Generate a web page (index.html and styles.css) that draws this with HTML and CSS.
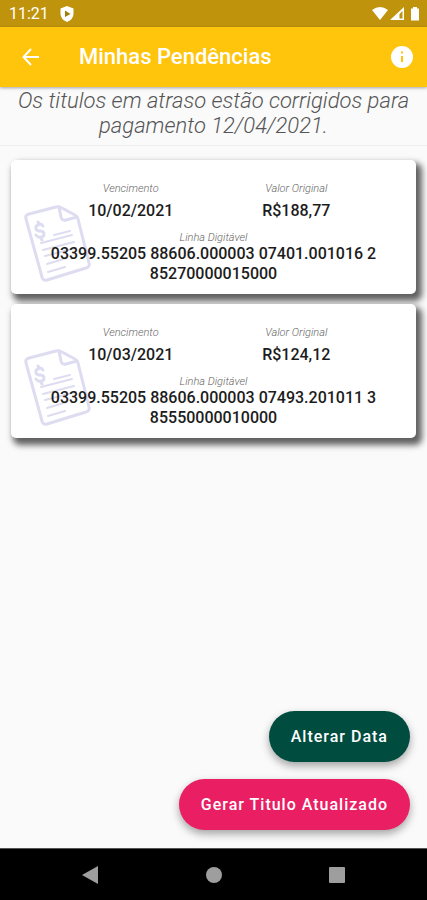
FILE: index.html
```html
<!DOCTYPE html>
<html lang="pt-BR">
<head>
<meta charset="utf-8">
<meta name="viewport" content="width=device-width, initial-scale=1">
<title>Minhas Pendências</title>
<link rel="stylesheet" href="styles.css">
</head>
<body>
<svg class="defs" aria-hidden="true">
  <symbol id="invoice" viewBox="0 0 70 80">
    <g fill="none" stroke="#dedcf0" stroke-width="3" stroke-linecap="round" stroke-linejoin="round">
      <path d="M6 10L33 3Q36 2 39 4L52 11Q54 12 55 15L66 59Q67 63 63 64L24 76Q20 77 19 73L3 15Q2 11 6 10Z"/>
      <path d="M36 3L38 13Q39 17 43 16L54 13"/>
      <path stroke-width="2" d="M31 31L47 27M18 39L49 31M20 46L51 38M22 52L53 44M24 60L44 54M25 68L42 63"/>
      <path d="M20 22Q18 19 15 21Q12 22 13 25Q14 27 17 27Q21 27 21 30Q21 33 18 33Q15 34 13 31M15 18L16 20M18 34L19 36"/>
    </g>
  </symbol>
</svg>
<div class="screen">
  <div class="status">
    <span class="clock">11:21</span>
    <svg class="shield" width="14" height="16" viewBox="0 0 14 16"><path d="M7 0L13.500 2.500V8Q13.500 13 7 16Q.5 13 .5 8V2.500Z" fill="#fff"/><path d="M5 4.500L10.500 8L5 11Z" fill="#a07d0c"/></svg>
    <svg class="signals" width="48" height="16" viewBox="0 0 48 16" fill="#fff"><path d="M0 4Q8-2 16 4L8 14Z"/><path fill-rule="evenodd" d="M18 14L32 1V14ZM27.500 12.500H30.500V5L27.500 8Z"/><path d="M39 2.500H41V1H45V2.500H47V14.500H39Z"/></svg>
  </div>
  <header class="appbar">
    <button class="icon-button" aria-label="Voltar"><svg width="18" height="18" viewBox="0 0 18 18" fill="none" stroke="#fff" stroke-width="2"><path d="M17 9H2M9 1L1.500 9L9 17"/></svg></button>
    <h1>Minhas Pendências</h1>
    <button class="icon-button" aria-label="Informações"><svg width="24" height="24" viewBox="0 0 24 24"><circle cx="12" cy="12" r="11" fill="#fff"/><path d="M11 6.500H13V8.500H11ZM11 11H13V17H11Z" fill="#ffc20e"/></svg></button>
  </header>
  <p class="notice">Os titulos em atraso estão corrigidos para pagamento 12/04/2021.</p>
  <main>
    <article class="card">
      <svg class="invoice" aria-hidden="true"><use href="#invoice"/></svg>
      <dl>
        <div><dt>Vencimento</dt><dd>10/02/2021</dd></div>
        <div><dt>Valor Original</dt><dd>R$188,77</dd></div>
        <div class="code"><dt>Linha Digitável</dt><dd>03399.55205 88606.000003 07401.001016 2 85270000015000</dd></div>
      </dl>
    </article>
    <article class="card">
      <svg class="invoice" aria-hidden="true"><use href="#invoice"/></svg>
      <dl>
        <div><dt>Vencimento</dt><dd>10/03/2021</dd></div>
        <div><dt>Valor Original</dt><dd>R$124,12</dd></div>
        <div class="code"><dt>Linha Digitável</dt><dd>03399.55205 88606.000003 07493.201011 3 85550000010000</dd></div>
      </dl>
    </article>
  </main>
  <div class="actions">
    <button class="fab green">Alterar Data</button>
    <button class="fab pink">Gerar Titulo Atualizado</button>
  </div>
  <nav class="navbar">
    <button aria-label="Voltar"><svg width="18" height="20" viewBox="0 0 18 20"><path d="M1 10L17 1V19Z" fill="#9e9e9e"/></svg></button>
    <button aria-label="Início"><svg width="18" height="18" viewBox="0 0 18 18"><circle cx="9" cy="9" r="8" fill="#9e9e9e"/></svg></button>
    <button aria-label="Recentes"><svg width="18" height="18" viewBox="0 0 18 18"><rect x="1" y="1" width="16" height="16" rx="1" fill="#9e9e9e"/></svg></button>
  </nav>
</div>
</body>
</html>
```
FILE: styles.css
```css
* { box-sizing: border-box; margin: 0; padding: 0; }
body { font-family: Roboto, "Liberation Sans", sans-serif; background: #fafafa; color: #1c1c1c; }
button { border: 0; background: none; font: inherit; }
svg { display: block; }
.defs { position: absolute; width: 0; height: 0; }
.screen { display: flex; flex-direction: column; min-height: 100vh; }
.status { display: flex; align-items: center; height: 27px; padding: 0 7px 0 9px; background: #bf930b; color: #fff; }
.clock { font-size: 16px; line-height: 20px; }
.shield { margin-left: 11px; }
.signals { margin-left: auto; }
.appbar { position: relative; display: flex; align-items: center; height: 60px; padding: 0 13px 0 22px; background: #ffc40c; color: #fff; box-shadow: 0 1px 3px rgba(0, 0, 0, .35); }
.appbar h1 { flex: 1; margin-left: 39px; font-size: 22px; line-height: 28px; font-weight: 500; }
.notice { padding: 1px 12px 7px; border-bottom: 1px solid #efefef; color: #555; font-size: 22px; line-height: 25px; font-style: italic; font-weight: 300; text-align: center; }
main { display: grid; gap: 10px; padding: 14px 11px; }
.card { position: relative; padding: 22px 37px 10px; border-radius: 5px; background: #fff; box-shadow: 4px 5px 6px 2px rgba(0, 0, 0, .62); }
.invoice { position: absolute; left: 12px; top: 44px; width: 70px; height: 80px; }
dl { position: relative; display: grid; grid-template-columns: 1fr 1fr; row-gap: 10px; text-align: center; }
.code { grid-column: 1 / -1; }
dt { color: #666; font-size: 11px; line-height: 13px; font-style: italic; font-weight: 300; }
dd { font-size: 16px; line-height: 20px; font-weight: 500; }
dl > div:not(.code) dt { margin-bottom: 6px; }
.actions { display: grid; justify-items: end; gap: 17px; margin-top: auto; padding: 16px 17px 18px; }
.fab { height: 51px; padding: 0 22px; border-radius: 26px; color: #fff; font-size: 16px; font-weight: 500; letter-spacing: 1px; box-shadow: 0 4px 8px rgba(0, 0, 0, .35); }
.green { background: #004d40; }
.pink { background: #e91e63; }
.navbar { display: flex; align-items: center; justify-content: space-between; height: 52px; padding: 0 81px; border-top: 1px solid #555; background: #000; }
```
